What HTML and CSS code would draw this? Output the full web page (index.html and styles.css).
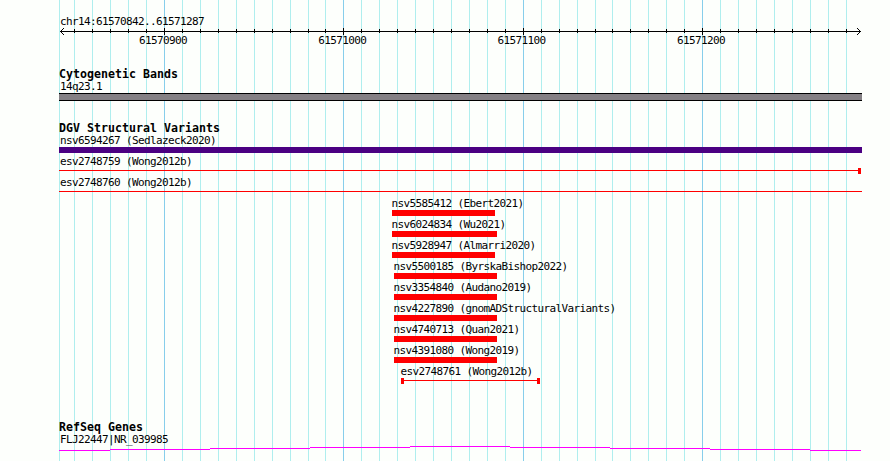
FILE: index.html
```
<!DOCTYPE html>
<html lang="en">
<head>
<meta charset="utf-8">
<title>chr14:61570842..61571287</title>
<link rel="stylesheet" href="styles.css">
</head>
<body>
<main class="browser">
  <svg class="grid" width="803" height="461" shape-rendering="crispEdges" aria-hidden="true">
    <path class="minor" d="M.5 0v461M15.5 0v461M33.5 0v461M51.5 0v461M69.5 0v461M87.5 0v461M123.5 0v461M141.5 0v461M159.5 0v461M177.5 0v461M195.5 0v461M213.5 0v461M231.5 0v461M249.5 0v461M266.5 0v461M302.5 0v461M320.5 0v461M338.5 0v461M356.5 0v461M374.5 0v461M392.5 0v461M410.5 0v461M428.5 0v461M446.5 0v461M482.5 0v461M500.5 0v461M518.5 0v461M536.5 0v461M553.5 0v461M571.5 0v461M589.5 0v461M607.5 0v461M625.5 0v461M661.5 0v461M679.5 0v461M697.5 0v461M715.5 0v461M733.5 0v461M751.5 0v461M769.5 0v461M787.5 0v461"/>
    <path class="major" d="M105.5 0v461M284.5 0v461M464.5 0v461M643.5 0v461"/>
  </svg>
  <section class="ruler">
    <p class="label">chr14:61570842..61571287</p>
    <svg class="axis" width="803" height="7" shape-rendering="crispEdges" aria-hidden="true">
      <path d="M1 3.5h801M15.5 1v4M33.5 1v4M51.5 1v4M69.5 1v4M87.5 1v4M123.5 1v4M141.5 1v4M159.5 1v4M177.5 1v4M195.5 1v4M213.5 1v4M231.5 1v4M249.5 1v4M266.5 1v4M302.5 1v4M320.5 1v4M338.5 1v4M356.5 1v4M374.5 1v4M392.5 1v4M410.5 1v4M428.5 1v4M446.5 1v4M482.5 1v4M500.5 1v4M518.5 1v4M536.5 1v4M553.5 1v4M571.5 1v4M589.5 1v4M607.5 1v4M625.5 1v4M661.5 1v4M679.5 1v4M697.5 1v4M715.5 1v4M733.5 1v4M751.5 1v4M769.5 1v4M787.5 1v4M105.5 0v7M284.5 0v7M464.5 0v7M643.5 0v7"/>
      <path d="M2 2.5h1M3 1.5h1M4 .5h1M2 4.5h1M3 5.5h1M4 6.5h1M800 2.5h1M799 1.5h1M798 .5h1M800 4.5h1M799 5.5h1M798 6.5h1"/>
    </svg>
    <div class="ticks"><span>61570900</span><span>61571000</span><span>61571100</span><span>61571200</span></div>
  </section>
  <section class="track cytoband">
    <h2>Cytogenetic Bands</h2>
    <p class="label">14q23.1</p>
    <div class="band"></div>
  </section>
  <section class="track variants">
    <h2>DGV Structural Variants</h2>
    <div class="feature"><p class="label">nsv6594267 (Sedlazeck2020)</p><div class="bar gain"></div></div>
    <div class="feature"><p class="label">esv2748759 (Wong2012b)</p><div class="span end"></div></div>
    <div class="feature"><p class="label">esv2748760 (Wong2012b)</p><div class="span"></div></div>
    <div class="feature early"><p class="label">nsv5585412 (Ebert2021)</p><div class="bar short"></div></div>
    <div class="feature early"><p class="label">nsv6024834 (Wu2021)</p><div class="bar long"></div></div>
    <div class="feature early"><p class="label">nsv5928947 (Almarri2020)</p><div class="bar short"></div></div>
    <div class="feature late"><p class="label">nsv5500185 (ByrskaBishop2022)</p><div class="bar short"></div></div>
    <div class="feature late"><p class="label">nsv3354840 (Audano2019)</p><div class="bar short"></div></div>
    <div class="feature late"><p class="label">nsv4227890 (gnomADStructuralVariants)</p><div class="bar short"></div></div>
    <div class="feature late"><p class="label">nsv4740713 (Quan2021)</p><div class="bar short"></div></div>
    <div class="feature late"><p class="label">nsv4391080 (Wong2019)</p><div class="bar short"></div></div>
    <div class="feature inner"><p class="label">esv2748761 (Wong2012b)</p><div class="span start end"></div></div>
  </section>
  <section class="track genes">
    <h2>RefSeq Genes</h2>
    <p class="label">FLJ22447|NR_039985</p>
    <svg class="gene" width="803" height="5" shape-rendering="crispEdges" aria-hidden="true">
      <path d="M0 4.5h51M51 3.5h100M151 2.5h100M251 1.5h100M351 .5h100M451 1.5h100M551 2.5h100M651 3.5h100M751 4.5h51"/>
    </svg>
  </section>
</main>
</body>
</html>
```
FILE: styles.css
```
* { box-sizing: border-box; }
body {
  margin: 0;
  background: #fdfffc;
  color: #000;
  font: 11px/12px "DejaVu Sans Mono", monospace;
  letter-spacing: -0.622px;
}
.browser {
  position: relative;
  width: 803px;
  height: 461px;
  margin-left: 59px;
  overflow: hidden;
}
.grid { position: absolute; inset: 0; z-index: -1; fill: none; }
.minor { stroke: #afeeee; }
.major { stroke: #87ceeb; }
svg { display: block; }
p, h2 { margin: 0; white-space: nowrap; }
h2 {
  height: 12px;
  font-size: 11.6px;
  line-height: 12px;
  letter-spacing: 0.016px;
}
.label { height: 12px; padding-left: 1px; }
.track .label { line-height: 14px; }
.ruler { height: 68px; padding-top: 16px; }
.axis { stroke: #000; fill: none; }
.ticks { display: flex; gap: 131.3px; padding-left: 80px; }
.ticks span { width: 48px; }
.cytoband { height: 54px; }
.band {
  height: 8px;
  margin-top: 1px;
  background: #848084;
  border: solid #000;
  border-width: 1px 0;
}
.variants { height: 299px; }
.feature { height: 21px; }
.bar { height: 6px; margin-top: 1px; background: #f00; }
.bar.gain { background: #4b0082; }
.early { margin-left: 333px; }
.late { margin-left: 335px; }
.early .label, .late .label { padding-left: 0; text-indent: -0.5px; }
.short { width: 103px; }
.long { width: 105px; }
.span {
  display: flex;
  justify-content: space-between;
  height: 6px;
  margin-top: 1px;
  background: linear-gradient(#f00, #f00) 0 2px / 100% 1px no-repeat;
}
.end::after, .start::before { content: ""; width: 3px; background: #f00; }
.end { width: 802px; justify-content: flex-end; }
.inner { margin-left: 342px; }
.inner .label { padding-left: 0; text-indent: -0.5px; }
.inner .span { width: 139px; justify-content: space-between; }
.gene { margin-top: 1px; stroke: #f0f; fill: none; }
```
